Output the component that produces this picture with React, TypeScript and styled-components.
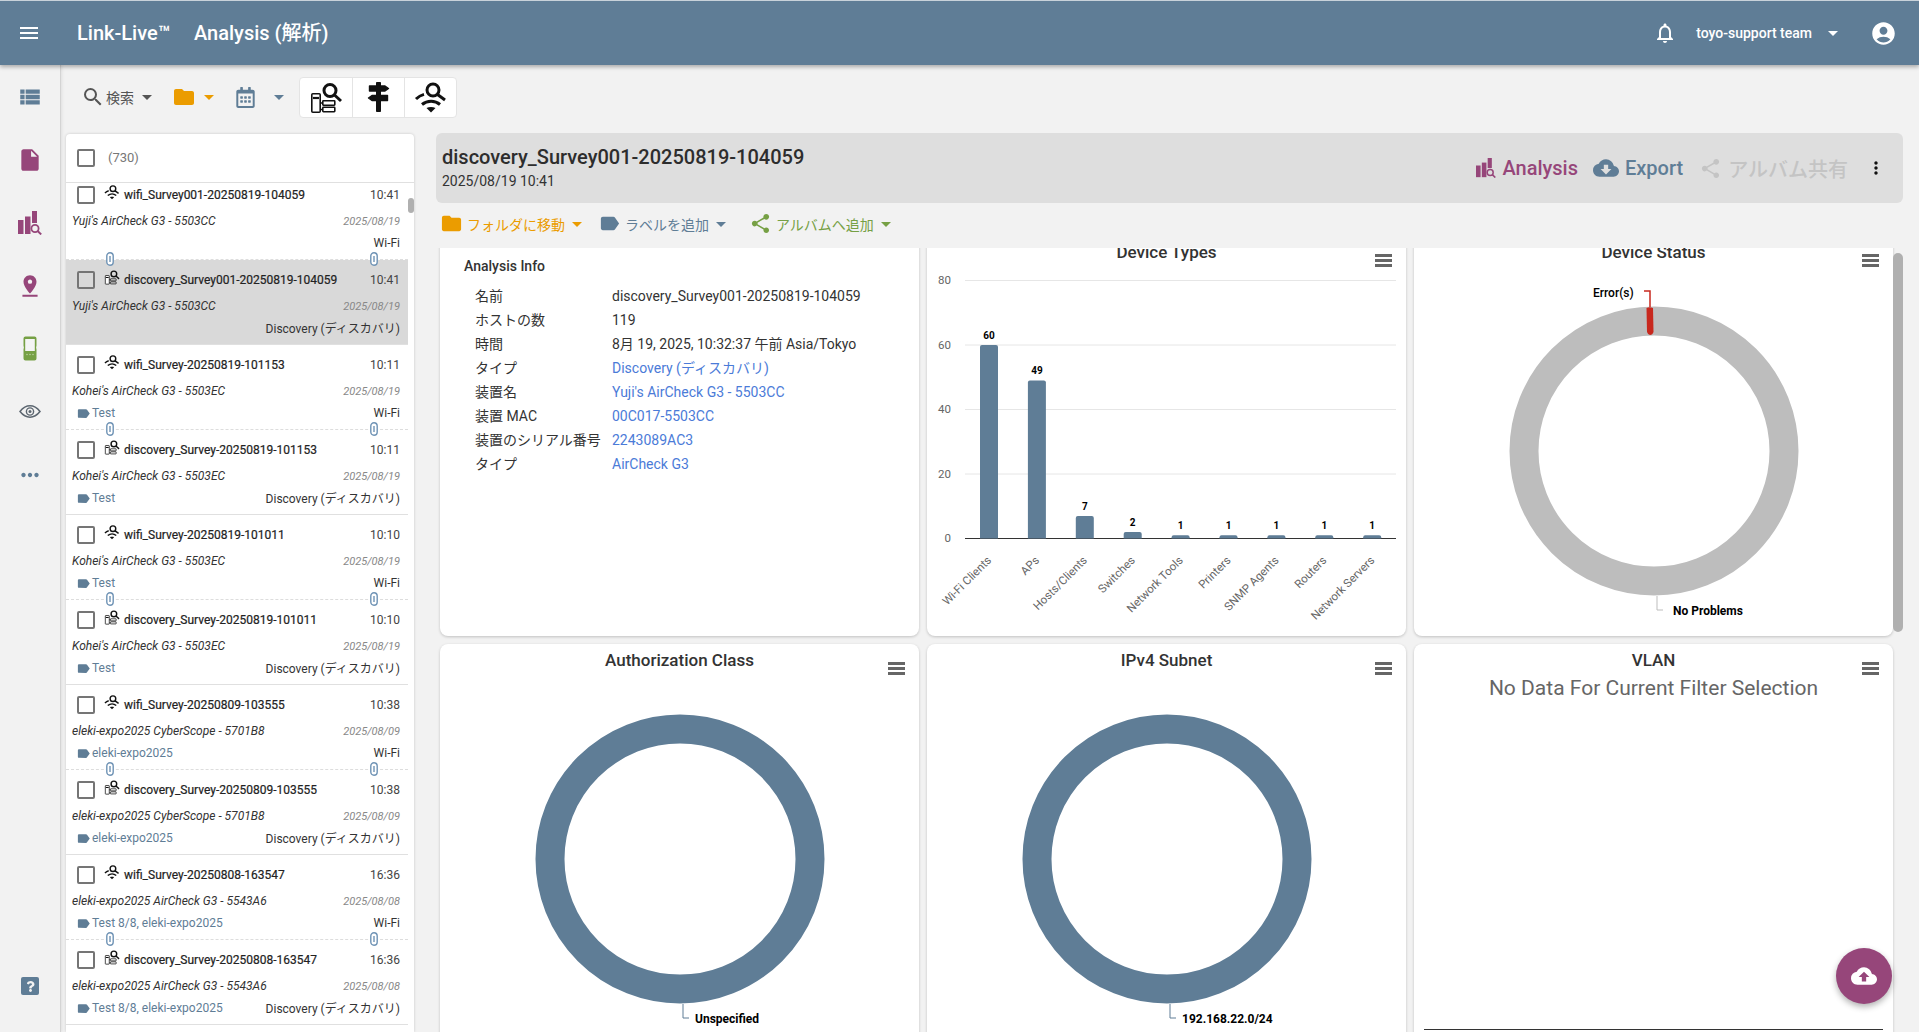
import React from "react";
import styled, { createGlobalStyle } from "styled-components";
import {
  MdMenu,
  MdArrowDropDown,
  MdNotificationsNone,
  MdAccountCircle,
  MdViewList,
  MdInsertDriveFile,
  MdPinDrop,
  MdMoreHoriz,
  MdSearch,
  MdFolder,
  MdLabel,
  MdShare,
  MdCloudDownload,
  MdCloudUpload,
  MdMoreVert,
} from "react-icons/md";
import { FaRegCalendarAlt, FaQuestion } from "react-icons/fa";

const SLATE = "#5f7d96";
const PLUM = "#96467a";
const ORANGE = "#eb9c00";
const GREEN = "#76a044";

const GlobalStyle = createGlobalStyle`
  html, body {
    margin: 0;
    height: 100%;
    overflow: hidden;
    background: #f2f2f2;
    font-family: Roboto, "Noto Sans CJK JP", sans-serif;
    color: #333;
  }
  * { box-sizing: border-box; }
`;

//Drawn icons that the packages do not have
const AnalysisIcon = ({ size = 24, color = PLUM }: { size?: number; color?: string }) => (
  <svg width={size} height={size} viewBox="0 0 24 24" fill={color}>
    <rect x="0" y="9" width="5.5" height="14" />
    <rect x="7" y="5.5" width="5.5" height="17.5" />
    <rect x="14" y="0" width="5" height="12" />
    <circle cx="17" cy="17.5" r="3.6" fill="none" stroke={color} strokeWidth="1.8" />
    <path d="M19.6 20l3.6 3.4" stroke={color} strokeWidth="2" />
  </svg>
);

const HandheldIcon = () => (
  <svg width="14" height="25" viewBox="0 0 14 25">
    <path
      d="M2.5.5h9a2 2 0 0 1 2 2v7l-.4 2 .4 2v9a2 2 0 0 1-2 2h-9a2 2 0 0 1-2-2v-9l.4-2-.4-2v-7a2 2 0 0 1 2-2z"
      fill={GREEN}
    />
    <rect x="2.2" y="3" width="9.6" height="12" fill="#f4f4f4" />
    <circle cx="4" cy="18.5" r="0.7" fill="#c8d8b0" />
    <circle cx="7" cy="18.5" r="0.7" fill="#c8d8b0" />
    <circle cx="10" cy="18.5" r="0.7" fill="#c8d8b0" />
  </svg>
);

const EyeIcon = () => (
  <svg width="22" height="13" viewBox="0 0 22 13" fill="none" stroke="#5c6670">
    <path d="M1 6.5C5 1.5 8 .8 11 .8s6 .7 10 5.7c-4 5-7 5.7-10 5.7S5 11.5 1 6.5z" strokeWidth="1.5" />
    <circle cx="11" cy="6.5" r="3.6" strokeWidth="1.4" />
    <circle cx="11" cy="6.5" r="1.5" fill="#5c6670" stroke="none" />
  </svg>
);

const WifiSearchIcon = ({ size = 34, color = "#111" }: { size?: number; color?: string }) => (
  <svg width={size} height={size} viewBox="0 0 34 34" fill="none" stroke={color}>
    <circle cx="19" cy="10" r="6" strokeWidth="3" />
    <path d="M23.5 14.5l7.5 5.5" strokeWidth="3" />
    <path d="M2 19c2.5-2.4 5-3.8 8-4.6" strokeWidth="3" />
    <path d="M8 24.5c5.2-4.4 13-4.4 18 0" strokeWidth="3" />
    <path d="M12.5 28l4.5 4.5 4.5-4.500c-2.600-1.400-6.400-1.400-9 0z" fill={color} stroke="none" />
  </svg>
);

const DiscoverySearchIcon = ({ size = 34, color = "#111" }: { size?: number; color?: string }) => (
  <svg width={size} height={size} viewBox="0 0 34 34" fill="none" stroke={color}>
    <circle cx="21" cy="10.5" r="6" strokeWidth="3" />
    <path d="M25.5 15l6.5 6" strokeWidth="3" />
    <rect x="2.8" y="13.8" width="8.4" height="18.4" rx="1" strokeWidth="1.6" fill="#fff" />
    <path d="M4 18h6" strokeWidth="2.2" />
    <path d="M11 23h2M11 29.5h2" strokeWidth="1.5" />
    <rect x="13.8" y="20.8" width="12" height="4.4" rx="0.6" strokeWidth="1.6" />
    <rect x="13.8" y="27.3" width="12" height="4.4" rx="0.6" strokeWidth="1.6" />
  </svg>
);

const SignpostIcon = () => (
  <svg width="30" height="34" viewBox="0 0 30 34" fill="#111" stroke="#111" strokeLinejoin="round">
    <rect x="12.5" y="2.5" width="4" height="29" strokeWidth="1" />
    <path d="M5.5 6h15.5l3.5 2.5-3.5 2.5H5.5z" strokeWidth="1.4" />
    <path d="M8 15.5h15.5v5H8l-3.5-2.5z" strokeWidth="1.4" />
  </svg>
);

const LinkIcon = () => (
  <svg width="8" height="14" viewBox="0 0 8 14" fill="#fff" stroke="#6f93b5" strokeWidth="1.4">
    <rect x="0.8" y="0.8" width="6.4" height="12.4" rx="3.2" />
    <path d="M4 4v6" />
  </svg>
);

const Caret = styled(MdArrowDropDown)<{ $color?: string }>`
  color: ${(p) => p.$color || "#555"};
  font-size: 24px;
  flex: none;
`;

const Page = styled.div`
  height: 100vh;
  display: flex;
  flex-direction: column;
  overflow: hidden;
`;

const Header = styled.header`
  height: 65px;
  flex: none;
  background: ${SLATE};
  border-top: 1px solid #c8d2da;
  color: #fff;
  display: flex;
  align-items: center;
  padding: 0 22px 0 17px;
  box-shadow: 0 2px 4px rgba(0, 0, 0, 0.3);
  position: relative;
  z-index: 3;
`;

const MenuButton = styled(MdMenu)`
  font-size: 24px;
  margin-right: 36px;
`;

const AppName = styled.div`
  font-size: 20px;
  line-height: 24px;
  font-weight: 500;
  width: 117px;
  white-space: nowrap;
`;

const PageName = styled.div`
  font-size: 20px;
  line-height: 24px;
  font-weight: 500;
  margin-top: -1px;
`;

const HeaderRight = styled.div`
  margin-left: auto;
  display: flex;
  align-items: center;
`;

const BellIcon = styled(MdNotificationsNone)`
  font-size: 24px;
  margin-right: 19px;
`;

const TeamName = styled.div`
  font-size: 14px;
  font-weight: 500;
  margin-right: 9px;
`;

const AccountIcon = styled(MdAccountCircle)`
  font-size: 27px;
  margin-left: 25px;
`;

const Body = styled.div`
  flex: 1;
  min-height: 0;
  display: flex;
`;

const Sidebar = styled.nav`
  width: 61px;
  flex: none;
  border-right: 1px solid #d4d4d4;
  box-shadow: 1px 0 3px rgba(0, 0, 0, 0.08);
  display: flex;
  flex-direction: column;
  align-items: center;
  padding: 0 0 37px;
`;

const SideSlot = styled.div<{ $color: string }>`
  height: 63px;
  width: 100%;
  flex: none;
  display: flex;
  justify-content: center;
  align-items: center;
  color: ${(p) => p.$color};
  font-size: 26px;
  line-height: 0;
`;

const HelpBox = styled.div`
  margin-top: auto;
  width: 18px;
  height: 18px;
  background: ${SLATE};
  border-radius: 2px;
  color: #f2f2f2;
  display: flex;
  align-items: center;
  justify-content: center;
  font-size: 11px;
`;

const Main = styled.main`
  flex: 1;
  min-width: 0;
  display: flex;
  flex-direction: column;
  padding: 0 16px 0 5px;
`;

const Toolbar = styled.div`
  height: 68px;
  flex: none;
  display: flex;
  align-items: center;
  padding: 0 0 4px 15px;
`;

const ToolItem = styled.div<{ $color?: string; $width: number }>`
  width: ${(p) => p.$width}px;
  display: flex;
  align-items: center;
  gap: 1px;
  color: ${(p) => p.$color || "#555"};
  font-size: 14px;
  flex: none;
`;

const CalendarIcon = styled(FaRegCalendarAlt)`
  font-size: 21px;
  margin-right: 10px;
`;

const ButtonGroup = styled.div`
  display: flex;
  height: 41px;
  background: #fff;
  border: 1px solid #e4e4e4;
  border-radius: 4px;
`;

const GroupButton = styled.div`
  width: 52px;
  display: flex;
  align-items: center;
  justify-content: center;
  color: #111;
  & + & {
    border-left: 1px solid #e4e4e4;
  }
`;

const Content = styled.div`
  flex: 1;
  min-height: 0;
  display: flex;
  gap: 22px;
`;

const ListPanel = styled.section`
  width: 348px;
  flex: none;
  background: #fff;
  border-radius: 4px 4px 0 0;
  box-shadow: 0 0 3px rgba(0, 0, 0, 0.18);
  display: flex;
  flex-direction: column;
  margin-top: 1px;
  overflow: hidden;
  position: relative;
`;

const ListHeader = styled.div`
  height: 49px;
  flex: none;
  border-bottom: 1px solid #e0e0e0;
  display: flex;
  align-items: center;
  padding-left: 11px;
  gap: 13px;
  font-size: 13px;
  color: #777;
`;

const ListCount = styled.span`
  margin-top: -2px;
`;

const Check = styled.span`
  width: 18px;
  height: 18px;
  flex: none;
  border: 2px solid #757575;
  border-radius: 2px;
  display: block;
`;

const ListScroll = styled.div`
  flex: 1;
  min-height: 0;
  overflow: hidden;
  padding-right: 6px;
`;

const ScrollThumb = styled.div`
  position: absolute;
  top: 64px;
  right: 0;
  width: 6px;
  height: 15px;
  border-radius: 3px;
  background: #b0b0b0;
`;

const Entry = styled.div<{ $selected?: boolean; $paired?: boolean; $first?: boolean }>`
  height: 85px;
  position: relative;
  padding: 9px 8px 0 6px;
  margin-top: ${(p) => (p.$first ? "-8px" : "0")};
  background: ${(p) => (p.$selected ? "#d9d9d9" : "transparent")};
  border-bottom: 1px ${(p) => (p.$paired ? "dashed #ddd" : "solid #e0e0e0")};
`;

const EntryTop = styled.div`
  height: 22px;
  margin-bottom: 4px;
  display: flex;
  align-items: center;
  padding-left: 5px;
`;

const EntryIcon = styled.span`
  width: 18px;
  margin: -6px 2px 0 9px;
  line-height: 0;
  flex: none;
`;

const EntryName = styled.div`
  flex: 1;
  font-size: 12px;
  color: #222;
  white-space: nowrap;
  -webkit-text-stroke: 0.2px #222;
`;

const EntryTime = styled.div`
  font-size: 12px;
  color: #444;
`;

const EntryRow = styled.div`
  display: flex;
  justify-content: space-between;
  align-items: center;
  height: 22px;
`;

const DeviceName = styled.div`
  font-size: 12px;
  font-style: italic;
  color: #333;
`;

const EntryDate = styled.div`
  font-size: 11px;
  font-style: italic;
  color: #888;
`;

const TagLabel = styled.div`
  display: flex;
  align-items: center;
  font-size: 12px;
  color: ${SLATE};
  padding-left: 5px;
  svg {
    font-size: 15px;
    margin: 0 1px 0 -1px;
  }
`;

const EntryType = styled.div<{ $cjk?: boolean }>`
  margin: ${(p) => (p.$cjk ? "-2px" : "0")} 0 0 auto;
  font-size: 12px;
  color: #333;
`;

const Clip = styled.span<{ $side: "left" | "right" }>`
  position: absolute;
  bottom: -7px;
  ${(p) => (p.$side === "left" ? "left: 40px;" : "right: 30px;")}
  line-height: 0;
  z-index: 1;
`;

const Detail = styled.section`
  flex: 1;
  min-width: 0;
  display: flex;
  flex-direction: column;
  position: relative;
`;

const TitleBar = styled.div`
  height: 70px;
  flex: none;
  background: #dedede;
  border-radius: 6px;
  display: flex;
  align-items: center;
  padding: 0 17px 0 6px;
`;

const TitleText = styled.div`
  flex: 1;
  padding-bottom: 3px;
`;

const RecordTitle = styled.h1`
  margin: 0 0 4px;
  font-size: 20px;
  line-height: 24px;
  font-weight: 500;
  color: #2d2d2d;
`;

const RecordDate = styled.div`
  font-size: 14px;
  color: #333;
`;

const TitleAction = styled.div<{ $color: string; $gap: number }>`
  display: flex;
  align-items: center;
  gap: 6px;
  color: ${(p) => p.$color};
  font-size: 20px;
  font-weight: 500;
  margin-right: ${(p) => p.$gap}px;
`;

const ActionBar = styled.div`
  height: 45px;
  flex: none;
  display: flex;
  align-items: center;
  padding: 0 0 4px 4px;
`;

const BarAction = styled.div<{ $color: string; $width: number }>`
  width: ${(p) => p.$width}px;
  flex: none;
  display: flex;
  align-items: center;
  gap: 4px;
  font-size: 14px;
  color: ${(p) => p.$color};
  svg:first-child {
    font-size: 23px;
  }
  svg:last-child {
    margin-left: -4px;
  }
`;

const ChartViewport = styled.div`
  flex: 1;
  min-height: 0;
  overflow: hidden;
  position: relative;
`;

const ChartGrid = styled.div`
  margin: -12px 10px 0 4px;
  display: grid;
  grid-template-columns: repeat(3, 1fr);
  grid-auto-rows: 400px;
  gap: 8px;
`;

const Card = styled.div`
  background: #fff;
  border-radius: 8px;
  box-shadow: 0 1px 3px rgba(0, 0, 0, 0.2);
  position: relative;
  overflow: hidden;
`;

const CardMenu = styled.span`
  position: absolute;
  top: 18px;
  right: 14px;
  width: 17px;
  height: 13px;
  border-top: 3px solid #666;
  border-bottom: 3px solid #666;
  &::after {
    content: "";
    display: block;
    height: 3px;
    margin-top: 2px;
    background: #666;
  }
`;

const CardTitle = styled.div`
  position: relative;
  text-align: center;
  font-size: 17px;
  line-height: 20px;
  font-weight: 500;
  padding-top: 6px;
  color: #333;
`;

const InfoTitle = styled.div`
  font-size: 14px;
  font-weight: 500;
  color: #333;
  padding: 20px 0 0 24px;
  line-height: 20px;
`;

const InfoTable = styled.div`
  display: grid;
  grid-template-columns: 137px 1fr;
  padding: 8px 0 0 35px;
  font-size: 14px;
  line-height: 24px;
  color: #333;
`;

const InfoLink = styled.span`
  color: #4b7bd8;
`;

const ChartSvg = styled.svg`
  position: absolute;
  left: 0;
  top: 0;
  display: block;
`;

const NoData = styled.div`
  text-align: center;
  font-size: 21px;
  line-height: 28px;
  margin-top: 4px;
  color: #666;
`;

const CardFootLine = styled.div`
  position: absolute;
  left: 10px;
  right: 10px;
  top: 385px;
  height: 1px;
  background: #333;
`;

const ChartScrollbar = styled.div`
  position: absolute;
  top: 5px;
  right: 0;
  width: 10px;
  height: 379px;
  border-radius: 5px;
  background: #b0b0b0;
`;

const Fab = styled.button`
  position: fixed;
  left: 1836px;
  top: 948px;
  width: 56px;
  height: 56px;
  border: 0;
  border-radius: 50%;
  background: ${PLUM};
  color: #fff;
  display: flex;
  align-items: center;
  justify-content: center;
  font-size: 26px;
  box-shadow: 0 3px 6px rgba(0, 0, 0, 0.3);
`;

type Record = {
  kind: "wifi" | "discovery";
  stamp: string;
  time: string;
  device: string;
  date: string;
  tag?: string;
};

const pair = (stamp: string, time: string, device: string, date: string, tag?: string, name = "Survey"): Record[] => [
  { kind: "wifi", stamp: `${name}-${stamp}`, time, device, date, tag },
  { kind: "discovery", stamp: `${name}-${stamp}`, time, device, date, tag },
];

const records: Record[] = [
  ...pair("20250819-104059", "10:41", "Yuji's AirCheck G3 - 5503CC", "2025/08/19", undefined, "Survey001"),
  ...pair("20250819-101153", "10:11", "Kohei's AirCheck G3 - 5503EC", "2025/08/19", "Test"),
  ...pair("20250819-101011", "10:10", "Kohei's AirCheck G3 - 5503EC", "2025/08/19", "Test"),
  ...pair("20250809-103555", "10:38", "eleki-expo2025 CyberScope - 5701B8", "2025/08/09", "eleki-expo2025"),
  ...pair("20250808-163547", "16:36", "eleki-expo2025 AirCheck G3 - 5543A6", "2025/08/08", "Test 8/8, eleki-expo2025"),
];

const info: [string, string, boolean][] = [
  ["名前", "discovery_Survey001-20250819-104059", false],
  ["ホストの数", "119", false],
  ["時間", "8月 19, 2025, 10:32:37 午前 Asia/Tokyo", false],
  ["タイプ", "Discovery (ディスカバリ)", true],
  ["装置名", "Yuji's AirCheck G3 - 5503CC", true],
  ["装置 MAC", "00C017-5503CC", true],
  ["装置のシリアル番号", "2243089AC3", true],
  ["タイプ", "AirCheck G3", true],
];

const bars: [string, number][] = [
  ["Wi-Fi Clients", 60],
  ["APs", 49],
  ["Hosts/Clients", 7],
  ["Switches", 2],
  ["Network Tools", 1],
  ["Printers", 1],
  ["SNMP Agents", 1],
  ["Routers", 1],
  ["Network Servers", 1],
];

const BASE = 302.5;

const BarChart = () => (
  <ChartSvg width={479} height={400} fontFamily="Roboto, sans-serif">
    {[80, 60, 40, 20, 0].map((v) => {
      const y = BASE - v * 3.225;
      return (
        <g key={v}>
          <line x1={38} x2={469} y1={y} y2={y} stroke={v === 0 ? "#333" : "#e6e6e6"} />
          <text x={24} y={y + 3.5} textAnchor="end" fontSize={11.5} fill="#666">
            {v}
          </text>
        </g>
      );
    })}
    {bars.map(([name, v], i) => {
      const x = 62 + i * 47.9;
      const h = Math.max(v * 3.225, 2);
      return (
        <g key={name}>
          <path d={`M${x - 9} ${BASE}V${BASE - h + 2}q0-2 2-2h14q2 0 2 2V${BASE}z`} fill={SLATE} />
          <text x={x} y={BASE - h - 6} textAnchor="middle" fontSize={10} fontWeight={700} fill="#000">
            {v}
          </text>
          <text
            x={x + 3}
            y={325}
            textAnchor="end"
            fontSize={11.5}
            fill="#666"
            transform={`rotate(-45 ${x + 3} 325)`}
          >
            {name}
          </text>
        </g>
      );
    })}
  </ChartSvg>
);

const Donut = ({
  color,
  label,
  labelX = 255,
  leaderColor,
  error,
}: {
  color: string;
  label: string;
  labelX?: number;
  leaderColor: string;
  error?: boolean;
}) => (
  <ChartSvg width={479} height={400} fontFamily="Roboto, sans-serif">
    <circle cx={240} cy={215} r={130} fill="none" stroke={color} strokeWidth={29} />
    <path d="M243 360V374H249" fill="none" stroke={leaderColor} strokeWidth={1} />
    <text x={labelX} y={379} fontSize={12} fontWeight={700} fill="#000">
      {label}
    </text>
    {error && (
      <g>
        <path d="M230 55H236V71" fill="none" stroke="#c8281e" strokeWidth={1.5} />
        <path d="M232.5 72q3-1.5 6.5 0L239.5 96q-1 3-3.5 3q-2 0-3-3z" fill="#c8281e" />
        <text x={179} y={61} fontSize={12} fontWeight={500} fill="#000">
          Error(s)
        </text>
      </g>
    )}
  </ChartSvg>
);

const App = () => {
  return (
    <>
      <GlobalStyle />
      <Page>
        <Header>
          <MenuButton />
          <AppName>Link-Live™</AppName>
          <PageName>Analysis (解析)</PageName>
          <HeaderRight>
            <BellIcon />
            <TeamName>toyo-support team</TeamName>
            <Caret $color="#fff" />
            <AccountIcon />
          </HeaderRight>
        </Header>
        <Body>
          <Sidebar>
            <SideSlot $color={SLATE}>
              <MdViewList />
            </SideSlot>
            <SideSlot $color={PLUM}>
              <MdInsertDriveFile />
            </SideSlot>
            <SideSlot $color={PLUM}>
              <AnalysisIcon />
            </SideSlot>
            <SideSlot $color={PLUM}>
              <MdPinDrop />
            </SideSlot>
            <SideSlot $color={GREEN}>
              <HandheldIcon />
            </SideSlot>
            <SideSlot $color="#5c6670">
              <EyeIcon />
            </SideSlot>
            <SideSlot $color={SLATE}>
              <MdMoreHoriz />
            </SideSlot>
            <HelpBox>
              <FaQuestion />
            </HelpBox>
          </Sidebar>
          <Main>
            <Toolbar>
              <ToolItem $width={91}>
                <MdSearch size={24} />
                検索
                <Caret />
              </ToolItem>
              <ToolItem $width={63} $color={ORANGE}>
                <MdFolder size={24} />
                <Caret $color={ORANGE} />
              </ToolItem>
              <ToolItem $width={64} $color={SLATE}>
                <CalendarIcon />
                <Caret $color={SLATE} />
              </ToolItem>
              <ButtonGroup>
                <GroupButton>
                  <DiscoverySearchIcon />
                </GroupButton>
                <GroupButton>
                  <SignpostIcon />
                </GroupButton>
                <GroupButton>
                  <WifiSearchIcon />
                </GroupButton>
              </ButtonGroup>
            </Toolbar>
            <Content>
              <ListPanel>
                <ListHeader>
                  <Check />
                  <ListCount>(730)</ListCount>
                </ListHeader>
                <ListScroll>
                  {records.map((r, i) => (
                    <Entry
                      key={r.kind + r.stamp}
                      $first={i === 0}
                      $selected={i === 1}
                      $paired={r.kind === "wifi"}
                    >
                      <EntryTop>
                        <Check />
                        <EntryIcon>
                          {r.kind === "wifi" ? (
                            <WifiSearchIcon size={16} />
                          ) : (
                            <DiscoverySearchIcon size={16} />
                          )}
                        </EntryIcon>
                        <EntryName>
                          {r.kind}_{r.stamp}
                        </EntryName>
                        <EntryTime>{r.time}</EntryTime>
                      </EntryTop>
                      <EntryRow>
                        <DeviceName>{r.device}</DeviceName>
                        <EntryDate>{r.date}</EntryDate>
                      </EntryRow>
                      <EntryRow>
                        {r.tag && (
                          <TagLabel>
                            <MdLabel />
                            {r.tag}
                          </TagLabel>
                        )}
                        {r.kind === "wifi" ? (
                          <EntryType>Wi-Fi</EntryType>
                        ) : (
                          <EntryType $cjk>Discovery (ディスカバリ)</EntryType>
                        )}
                      </EntryRow>
                      {r.kind === "wifi" && (
                        <>
                          <Clip $side="left">
                            <LinkIcon />
                          </Clip>
                          <Clip $side="right">
                            <LinkIcon />
                          </Clip>
                        </>
                      )}
                    </Entry>
                  ))}
                </ListScroll>
                <ScrollThumb />
              </ListPanel>
              <Detail>
                <TitleBar>
                  <TitleText>
                    <RecordTitle>discovery_Survey001-20250819-104059</RecordTitle>
                    <RecordDate>2025/08/19 10:41</RecordDate>
                  </TitleText>
                  <TitleAction $color={PLUM} $gap={15}>
                    <AnalysisIcon size={20} />
                    Analysis
                  </TitleAction>
                  <TitleAction $color={SLATE} $gap={16}>
                    <MdCloudDownload size={26} />
                    Export
                  </TitleAction>
                  <TitleAction $color="#c4c4c4" $gap={18}>
                    <MdShare size={23} />
                    アルバム共有
                  </TitleAction>
                  <MdMoreVert size={20} color="#111" />
                </TitleBar>
                <ActionBar>
                  <BarAction $color={ORANGE} $width={158}>
                    <MdFolder />
                    フォルダに移動
                    <Caret $color={ORANGE} />
                  </BarAction>
                  <BarAction $color={SLATE} $width={151}>
                    <MdLabel />
                    ラベルを追加
                    <Caret $color={SLATE} />
                  </BarAction>
                  <BarAction $color={GREEN} $width={170}>
                    <MdShare />
                    アルバムへ追加
                    <Caret $color={GREEN} />
                  </BarAction>
                </ActionBar>
                <ChartViewport>
                  <ChartGrid>
                    <Card>
                      <InfoTitle>Analysis Info</InfoTitle>
                      <InfoTable>
                        {info.map(([k, v, link], i) => (
                          <React.Fragment key={i}>
                            <span>{k}</span>
                            {link ? <InfoLink>{v}</InfoLink> : <span>{v}</span>}
                          </React.Fragment>
                        ))}
                      </InfoTable>
                    </Card>
                    <Card>
                      <BarChart />
                      <CardTitle>Device Types</CardTitle>
                      <CardMenu />
                    </Card>
                    <Card>
                      <Donut color="#bdbdbd" leaderColor="#bdbdbd" label="No Problems" labelX={259} error />
                      <CardTitle>Device Status</CardTitle>
                      <CardMenu />
                    </Card>
                    <Card>
                      <Donut color={SLATE} leaderColor={SLATE} label="Unspecified" />
                      <CardTitle>Authorization Class</CardTitle>
                      <CardMenu />
                    </Card>
                    <Card>
                      <Donut color={SLATE} leaderColor={SLATE} label="192.168.22.0/24" />
                      <CardTitle>IPv4 Subnet</CardTitle>
                      <CardMenu />
                    </Card>
                    <Card>
                      <CardTitle>VLAN</CardTitle>
                      <NoData>No Data For Current Filter Selection</NoData>
                      <CardFootLine />
                      <CardMenu />
                    </Card>
                  </ChartGrid>
                  <ChartScrollbar />
                </ChartViewport>
              </Detail>
            </Content>
          </Main>
        </Body>
      </Page>
      <Fab>
        <MdCloudUpload />
      </Fab>
    </>
  );
};

export default App;
